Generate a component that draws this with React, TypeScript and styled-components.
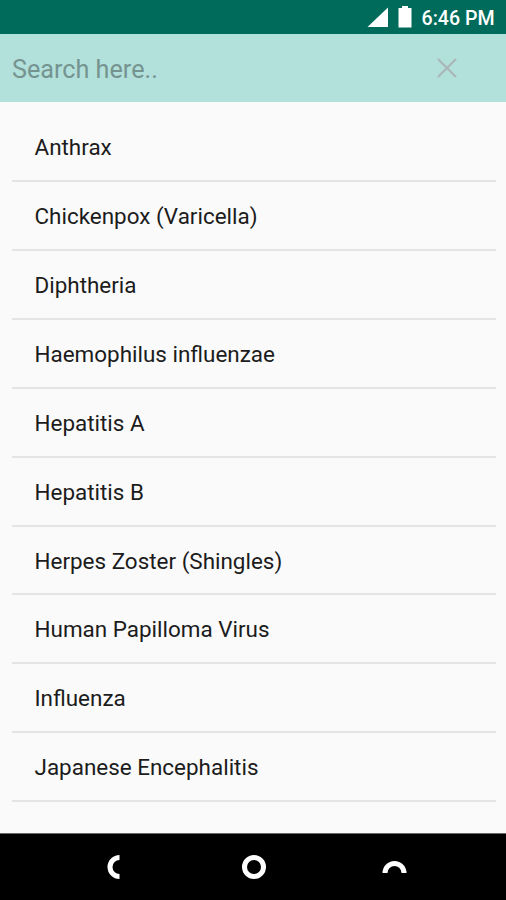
import React from "react";
import styled, { createGlobalStyle } from "styled-components";

const GlobalStyle = createGlobalStyle`
  *, *::before, *::after { box-sizing: border-box; }
  body { margin: 0; background: #fafafa; font-family: Roboto, sans-serif; }
`;
const Screen = styled.main`
  display: flex;
  flex-direction: column;
  width: 506px;
  height: 900px;
  background: #fafafa;
  overflow: hidden;
`;
const StatusBar = styled.header`
  display: flex;
  align-items: center;
  justify-content: flex-end;
  height: 34px;
  flex: none;
  padding: 2px 10px 0 0;
  background: #016b5b;
  color: #fff;
`;
const StatusIcons = styled.svg`
  flex: none;
  margin-top: -2px;
`;
const Clock = styled.time`
  width: 74.5px;
  margin-left: 9px;
  padding-top: 2px;
  font-size: 19.6px;
  font-weight: 500;
  line-height: 24px;
  white-space: nowrap;
`;
const SearchBar = styled.div`
  display: flex;
  align-items: center;
  justify-content: space-between;
  height: 67.5px;
  flex: none;
  padding: 0 48px 0 12px;
  background: #b2e0db;
`;
const SearchInput = styled.input`
  width: 300px;
  padding: 4px 0 0;
  border: 0;
  outline: 0;
  background: transparent;
  font: 400 25.2px/32px Roboto, sans-serif;
  color: #222;
  &::placeholder { color: #759490; opacity: 1; }
`;
const ClearButton = styled.button`
  display: flex;
  padding: 0;
  border: 0;
  background: transparent;
`;
const List = styled.ul`
  flex: 1;
  margin: 0;
  padding: 11.5px 10px 0 12px;
  list-style: none;
`;
const Item = styled.li`
  height: 68.93px;
  padding: 1px 0 0 22.5px;
  border-bottom: 2px solid #e4e4e4;
  font-size: 22.45px;
  line-height: 66px;
  color: #1c1c1c;
  white-space: nowrap;
`;
const NavBar = styled.nav`
  display: grid;
  grid-template-columns: repeat(3, 140px);
  justify-content: center;
  align-items: center;
  justify-items: center;
  height: 67px;
  flex: none;
  padding-left: 1px;
  border-top: 1px solid #686868;
  background: #000;
`;
const NavIcon = styled.svg`
  fill: none;
  stroke: #fff;
  stroke-width: 5px;
`;
const diseases = ["Anthrax", "Chickenpox (Varicella)", "Diphtheria", "Haemophilus influenzae", "Hepatitis A", "Hepatitis B", "Herpes Zoster (Shingles)", "Human Papilloma Virus", "Influenza", "Japanese Encephalitis"];

export default function App() {
  return (
    <Screen>
      <GlobalStyle />
      <StatusBar>
        <StatusIcons width="47" height="24" viewBox="0 0 47 24" fill="#fff">
          <path d="M1.5 22 22 2.5V22z" />
          <path d="M32.5 3H36V1h6v2h3.5v19.5h-13z" />
        </StatusIcons>
        <Clock>6:46 PM</Clock>
      </StatusBar>
      <SearchBar>
        <SearchInput placeholder="Search here.." aria-label="Search" />
        <ClearButton aria-label="Clear">
          <svg width="22" height="22" viewBox="0 0 22 22" stroke="#aab6b8" strokeWidth="2.2"><path d="M2 2 20 20M20 2 2 20" /></svg>
        </ClearButton>
      </SearchBar>
      <List>{diseases.map((name) => <Item key={name}>{name}</Item>)}</List>
      <NavBar>
        <NavIcon width="30" height="30" viewBox="0 0 30 30"><path d="M20.5 5.5A9.5 9.5 0 0 0 20.5 24.5" /></NavIcon>
        <NavIcon width="30" height="30" viewBox="0 0 30 30"><circle cx="15" cy="15" r="9.5" /></NavIcon>
        <NavIcon width="30" height="30" viewBox="0 0 30 30"><path d="M6 21A9.5 9.5 0 0 1 25 21" /></NavIcon>
      </NavBar>
    </Screen>
  );
}
